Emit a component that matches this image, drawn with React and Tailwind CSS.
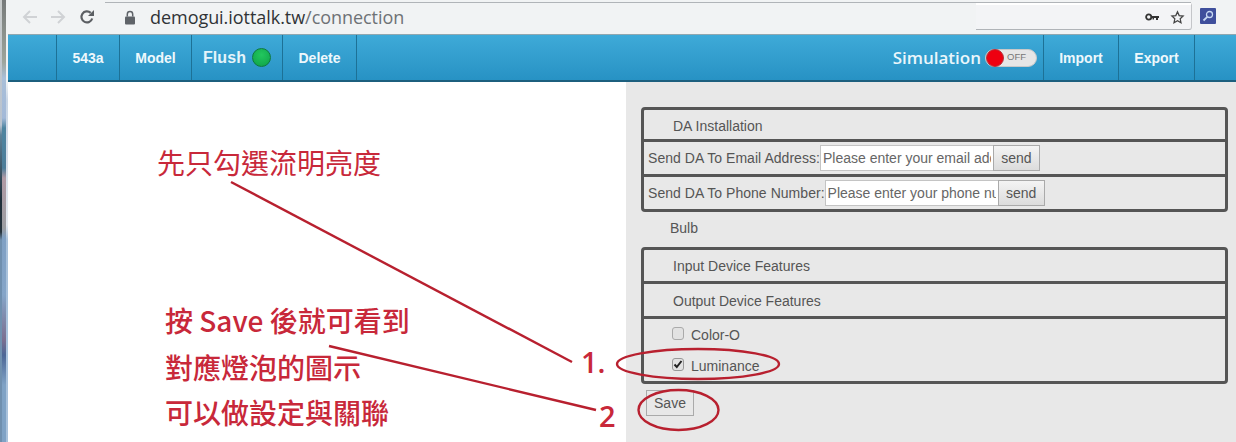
import React from "react";

const sans = "font-['Liberation_Sans',Arial,sans-serif]";

function NavItem({ w, children }) {
  return (
    <div className={`${w} h-full flex items-center justify-center pt-[2px] border-r border-[#1d7196] text-[14px] font-bold text-[#eef8fc] ${sans}`}>
      {children}
    </div>
  );
}

function SendRow({ label, placeholder }) {
  return (
    <div className={`h-[32px] flex items-center pl-[4px] text-[14px] text-[#555] ${sans}`}>
      <span className="tracking-[0.04px]">{label}</span>
      <input
        readOnly
        placeholder={placeholder}
        className="w-[174px] h-[26px] bg-white border border-[#c4c4c4] px-[2px] text-[14px] text-[#555] placeholder:text-[#666] outline-none"
      />
      <button className="w-[47px] h-[26px] -ml-px border border-[#aaa] bg-gradient-to-b from-[#f4f4f4] to-[#dcdcdc] text-[14px] text-[#555]">send</button>
    </div>
  );
}

export default function App() {
  return (
    <div className={`relative w-[1236px] h-[442px] overflow-hidden bg-white flex ${sans}`}>
      <div className="w-[8px] h-full shrink-0 flex">
        <div className="w-[2px] h-full bg-[linear-gradient(180deg,#c9cccc_0,#b9c3cf_125px,#5d8198_135px,#1f2f3a_200px,#26333c_232px,#6f8fae_240px,#6f8fae_442px)]" />
        <div className="w-[4px] h-full bg-[linear-gradient(180deg,#777a7a_0,#9da59c_62px,#a9bfd8_78px,#a3b9d8_118px,#4d84a0_128px,#4d7d9a_168px,#b09aa5_178px,#9c9ea2_228px,#7fa0c4_238px,#85a5c8_295px,#7b6f90_340px,#4d6796_355px,#7fa2c5_385px,#7fa2c5_442px)]" />
        <div className="w-[2px] h-full bg-[linear-gradient(180deg,#f1f3f4_0,#f1f3f4_82px,#c9d6e6_100px,#e4e8ee_225px,#a9c2dc_240px,#a9c2dc_442px)]" />
      </div>
      <div className="flex-1 flex flex-col min-w-0">
        {/* browser bar */}
        <div className="h-[35px] shrink-0 bg-[#f1f3f4] flex items-center relative border-b border-[#8fa7b0]">
          <div className="absolute left-[97px] top-[2px] w-[871px] h-px bg-[#b0b4b8]" />
          <div className="flex items-center pl-[14px] shrink-0">
            <svg width="16" height="16" viewBox="0 0 16 16" fill="none" stroke="#d0d2d5" strokeWidth="2" className="shrink-0"><path d="M15 8H2.500M8 2 2 8l6 6" /></svg>
            <svg width="16" height="16" viewBox="0 0 16 16" fill="none" stroke="#d0d2d5" strokeWidth="2" className="shrink-0 ml-[12px]"><path d="M1 8h12.500M8 2l6 6-6 6" /></svg>
            <svg width="16" height="16" viewBox="0 0 16 16" fill="none" className="shrink-0 ml-[13px]"><path d="M13.200 9.500A5.500 5.500 0 1 1 11.700 3.900" stroke="#5c5f63" strokeWidth="2.200" /><path d="M15 1v6H9z" fill="#5c5f63" /></svg>
          </div>
          <svg width="12" height="15" viewBox="0 0 12 15" className="ml-[29px] shrink-0"><path d="M3.300 6.500V4.200a2.700 2.700 0 0 1 5.400 0v2.300" fill="none" stroke="#5f6368" strokeWidth="1.500" /><rect x="1" y="6.500" width="10" height="8" rx="1" fill="#5f6368" /></svg>
          <div className="ml-[14px] text-[18px] tracking-[-0.05px] leading-none text-[#303336] font-['Open_Sans',sans-serif]">
            demogui.iottalk.tw<span className="text-[#6e7276]">/connection</span>
          </div>
          <div className="absolute left-[968px] right-[44px] top-[2px] h-[28px] bg-[#f3f4f6] border-t-[3px] border-t-white border-b border-r border-b-[#b0b4b8] border-r-[#c4c6c9] rounded-r-[3px] flex items-center justify-end gap-[11px] pr-[6px]">
            <div className="absolute left-0 right-0 -top-[3px] h-px bg-[#b0b4b8]" />
            <svg width="14" height="8" viewBox="0 0 14 8"><circle cx="3.700" cy="4" r="2.600" fill="none" stroke="#333" strokeWidth="1.800" /><path d="M6 3h8v2h-1v2h-2V5H9v1.500H7.500V5H6z" fill="#333" /></svg>
            <svg width="15" height="15" viewBox="0 0 24 24" fill="none" stroke="#444" strokeWidth="2"><path d="m12 3 2.700 6 6.300.7-4.700 4.300 1.300 6.500L12 17.200 6.400 20.500 7.700 14 3 9.700 9.300 9z" /></svg>
          </div>
          <div className="absolute right-[20px] top-[8px] w-[16px] h-[16px] rounded-[1px] bg-[#3f4f9c] flex items-center justify-center">
            <svg width="12" height="12" viewBox="0 0 12 12" fill="none" stroke="#c7d8f2" strokeWidth="1.300"><circle cx="7.500" cy="4.500" r="3" /><path d="M5.300 6.800 1.500 10.500" strokeWidth="1.800" /></svg>
          </div>
        </div>

        {/* nav */}
        <div className="h-[47px] shrink-0 flex items-center bg-gradient-to-b from-[#3eaad8] to-[#2792c4] border-b-[2px] border-[#1c5f7e]">
          <div className="w-[49px] h-full border-r border-[#1d7196]" />
          <NavItem w="w-[63px]">543a</NavItem>
          <NavItem w="w-[72px]">Model</NavItem>
          <div className="w-[91px] h-full flex items-center justify-center gap-[6px] border-r border-[#1d7196] text-[16px] tracking-[0.1px] font-bold text-[#e4f4fa]">
            <span>Flush</span>
            <span className="w-[19px] h-[19px] rounded-full border border-[#0f7a3c] bg-[radial-gradient(circle_at_50%_35%,#22c75e,#0ea148)]" />
          </div>
          <NavItem w="w-[74px]">Delete</NavItem>
          <div className="flex-1 h-full flex items-center justify-end pr-[6px] gap-[4px]">
            <span className="text-[17px] font-semibold text-[#eaf6fb] font-['Open_Sans',sans-serif]">Simulation</span>
            <div className="relative w-[52px] h-[18px] rounded-full bg-[#e6e6e6] border border-[#c9c9c9] flex items-center pl-[21px] text-[9.500px] text-[#777]">
              OFF
              <span className="absolute left-0 top-[-1px] w-[18px] h-[18px] rounded-full bg-[#ee0010] border border-[#b5343d]" />
            </div>
          </div>
          <div className="w-[76px] h-full flex items-center justify-center pt-[2px] border-x border-[#1d7196] text-[14px] font-bold text-[#eef8fc]">Import</div>
          <NavItem w="w-[76px]">Export</NavItem>
          <div className="w-[41px] h-full" />
        </div>

        {/* main */}
        <div className="flex-1 flex min-h-0">
          <div className="w-[618px] shrink-0 bg-white" />
          <div className="flex-1 bg-[#e8e8e8] pl-[15px] pr-[8px] pt-[25px]">
            <div className="border-[3px] border-[#555] rounded-[4px] text-[14px] text-[#555]">
              <div className="h-[29px] flex items-center pl-[29px] pt-[3px]">DA Installation</div>
              <div className="border-t-[3px] border-[#555]">
                <SendRow label="Send DA To Email Address:" placeholder="Please enter your email address" />
              </div>
              <div className="border-t-[3px] border-[#555]">
                <SendRow label="Send DA To Phone Number:" placeholder="Please enter your phone number" />
              </div>
            </div>
            <div className="h-[35px] flex items-center pl-[29px] pb-[3px] text-[14px] text-[#555]">Bulb</div>
            <div className="border-[3px] border-[#555] rounded-[4px] text-[14px] text-[#555]">
              <div className="h-[31px] flex items-center pl-[29px] pt-[2px]">Input Device Features</div>
              <div className="border-t-[3px] border-[#555] h-[35px] flex items-center pl-[29px] pt-[2px]">Output Device Features</div>
              <div className="border-t-[3px] border-[#555] h-[65px] pl-[28px]">
                <label className="h-[31px] flex items-center gap-[7px] pt-[2px]">
                  <span className="w-[12px] h-[13px] rounded-[3px] border border-[#aaa] bg-[#e2e2e2] -mt-[4px]" />
                  Color-O
                </label>
                <label className="h-[31px] flex items-center gap-[7px] pt-[2px]">
                  <span className="w-[12px] h-[13px] rounded-[3px] border border-[#999] bg-[#e2e2e2] -mt-[5px] flex items-center justify-center">
                    <svg width="10" height="10" viewBox="0 0 10 10" fill="none" stroke="#222" strokeWidth="2"><path d="m1.500 5.500 2.300 2.500 4.700-6" /></svg>
                  </span>
                  Luminance
                </label>
              </div>
            </div>
            <button className="block mt-[6px] ml-[5px] w-[48px] h-[26px] border border-[#aaa] bg-[#e8e8e8] text-[14px] leading-none text-[#555]">Save</button>
          </div>
        </div>
      </div>

      {/* hand-drawn annotations laid over the page */}
      <svg className="absolute inset-0 pointer-events-none" width="1236" height="442" fill="none" stroke="#b8202f">
        <path d="M231 182 L572 362" strokeWidth="2.400" />
        <path d="M329 346 L596 410" strokeWidth="2.400" />
        <ellipse cx="698" cy="364" rx="81" ry="15" strokeWidth="2.400" />
        <ellipse cx="678.500" cy="410" rx="40" ry="20" strokeWidth="2.400" />
      </svg>
      <div className="absolute left-[157px] top-[145px] text-[28px] leading-[34px] text-[#c8283a] font-['Noto_Sans_CJK_TC',sans-serif]">先只勾選流明亮度</div>
      <div className="absolute left-[165px] top-[300px] text-[28px] leading-[40px] font-medium text-[#c8283a] font-['Noto_Sans_CJK_TC',sans-serif]">
        <div>按 Save 後就可看到</div>
        <div className="mt-[7px]">對應燈泡的圖示</div>
        <div className="mt-[5px]">可以做設定與關聯</div>
      </div>
      <div className="absolute left-[581px] top-[343px] text-[29px] leading-[38px] font-semibold text-[#c8283a] font-['Open_Sans',sans-serif]">1.</div>
      <div className="absolute left-[599px] top-[396px] text-[29px] leading-[40px] font-semibold text-[#c8283a] font-['Open_Sans',sans-serif]">2</div>
    </div>
  );
}
